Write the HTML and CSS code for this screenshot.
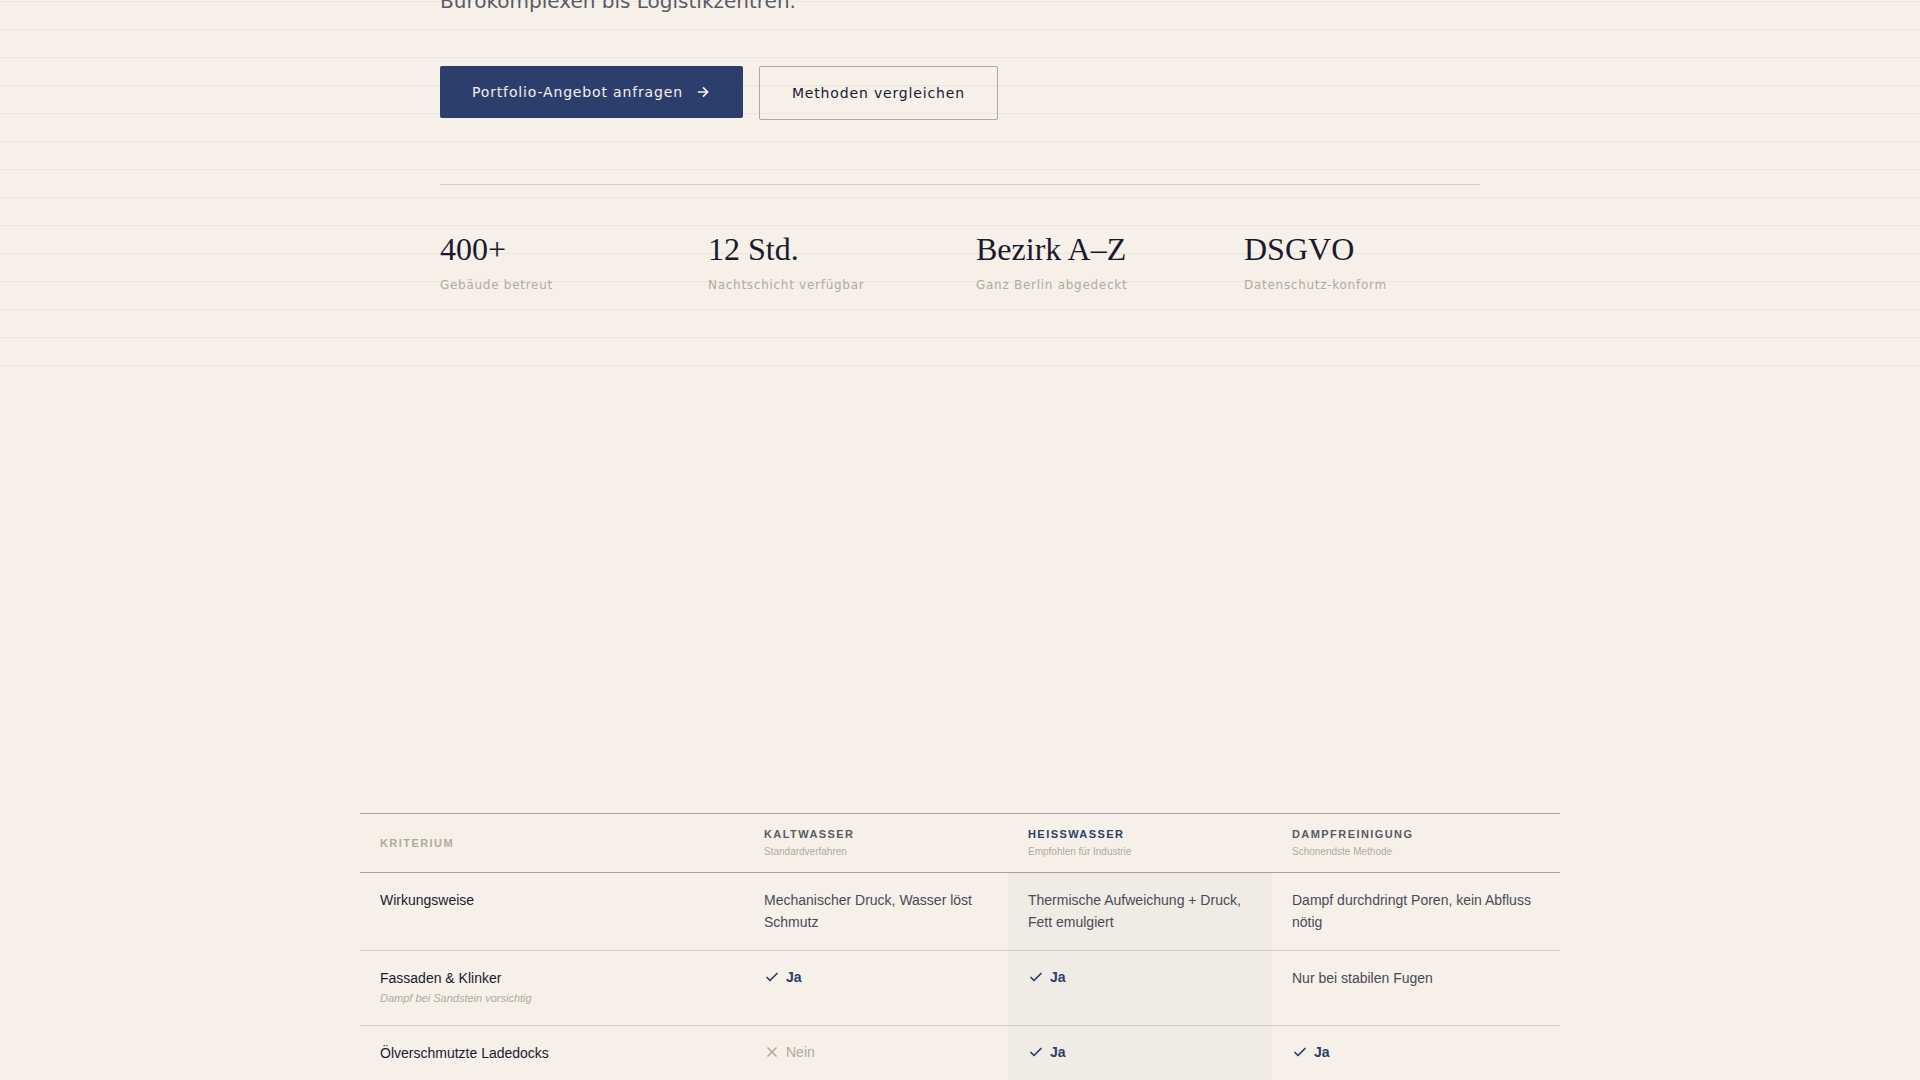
FILE: index.html
```
<!DOCTYPE html>
<html lang="de">
<head>
  <meta charset="UTF-8">
  <title>Fassadenreinigung Berlin</title>
  <meta name="viewport" content="width=device-width, initial-scale=1">
  <link rel="stylesheet" href="styles.css">
</head>
<body>
  <!-- shared icons -->
  <svg class="sprite" width="0" height="0" aria-hidden="true">
    <symbol id="arrow" viewBox="0 0 16 16"><path d="M3.5 8h9M8.5 3.8 12.7 8l-4.2 4.2"/></symbol>
    <symbol id="check" viewBox="0 0 16 16"><path d="M3 8.5l3 3 7-7"/></symbol>
    <symbol id="cross" viewBox="0 0 16 16"><path d="M4 4l8 8M12 4l-8 8"/></symbol>
  </svg>

  <section class="hero">
    <div class="hero-inner">
      <p class="hero-lead">Bürokomplexen bis Logistikzentren.</p>
      <div class="actions">
        <a class="btn btn-primary" href="#angebot">Portfolio-Angebot anfragen <svg class="icon"><use href="#arrow"/></svg></a>
        <a class="btn btn-outline" href="#methoden">Methoden vergleichen</a>
      </div>
      <div class="stats">
        <div>
          <div class="stat-value">400+</div>
          <div class="stat-label">Gebäude betreut</div>
        </div>
        <div>
          <div class="stat-value">12 Std.</div>
          <div class="stat-label">Nachtschicht verfügbar</div>
        </div>
        <div>
          <div class="stat-value">Bezirk A–Z</div>
          <div class="stat-label">Ganz Berlin abgedeckt</div>
        </div>
        <div>
          <div class="stat-value">DSGVO</div>
          <div class="stat-label">Datenschutz-konform</div>
        </div>
      </div>
    </div>
  </section>

  <section class="methods" id="methoden">
    <table class="compare">
      <colgroup>
        <col class="col-name">
        <col class="col-method">
        <col class="col-method">
        <col class="col-last">
      </colgroup>
      <thead>
        <tr>
          <th scope="col" class="muted">Kriterium</th>
          <th scope="col">Kaltwasser <span class="sub">Standardverfahren</span></th>
          <th scope="col" class="accent">Heisswasser <span class="sub">Empfohlen für Industrie</span></th>
          <th scope="col">Dampfreinigung <span class="sub">Schonendste Methode</span></th>
        </tr>
      </thead>
      <tbody>
        <tr>
          <th scope="row">Wirkungsweise</th>
          <td>Mechanischer Druck, Wasser löst Schmutz</td>
          <td class="featured">Thermische Aufweichung + Druck, Fett emulgiert</td>
          <td>Dampf durchdringt Poren, kein Abfluss nötig</td>
        </tr>
        <tr>
          <th scope="row">Fassaden &amp; Klinker <span class="note">Dampf bei Sandstein vorsichtig</span></th>
          <td><span class="mark yes"><svg class="icon"><use href="#check"/></svg>Ja</span></td>
          <td class="featured"><span class="mark yes"><svg class="icon"><use href="#check"/></svg>Ja</span></td>
          <td>Nur bei stabilen Fugen</td>
        </tr>
        <tr>
          <th scope="row">Ölverschmutzte Ladedocks</th>
          <td><span class="mark no"><svg class="icon"><use href="#cross"/></svg>Nein</span></td>
          <td class="featured"><span class="mark yes"><svg class="icon"><use href="#check"/></svg>Ja</span></td>
          <td><span class="mark yes"><svg class="icon"><use href="#check"/></svg>Ja</span></td>
        </tr>
      </tbody>
    </table>
  </section>
</body>
</html>
```
FILE: styles.css
```
* { box-sizing: border-box; margin: 0; padding: 0; }
body { font-family: "Liberation Sans", Arial, sans-serif; background: #f6f0e9; color: #1a1a2e; overflow-x: hidden; }
.sprite { display: block; }
.icon { width: 16px; height: 16px; flex: none; fill: none; stroke: currentColor; stroke-width: 1.7; stroke-linecap: round; stroke-linejoin: round; }

/* Hero */
.hero {
  margin-top: -26px;
  padding: 10px 40px 96px;
  font-family: "DejaVu Sans", sans-serif;
  background: repeating-linear-gradient(0deg, transparent 0 27px, #e9e6df 27px 28px);
}
.hero-inner { max-width: 1040px; margin: 0 auto; }
.hero-lead { font-size: 20px; line-height: 34px; color: #5a5a64; margin-bottom: 48px; }
.actions { display: flex; flex-wrap: wrap; align-items: flex-start; gap: 16px; margin-bottom: 64px; }
.btn { display: inline-flex; align-items: center; gap: 12px; padding: 16px 32px; border-radius: 2px; font-size: 14px; line-height: 20px; letter-spacing: 0.06em; text-decoration: none; }
.btn-primary { background: #2c3e6b; color: #f6f0e9; }
.btn-outline { border: 1px solid #aaa79c; color: #1a1a2e; }
.btn-primary:hover { background: #1f2e54; }
.stats { display: grid; grid-template-columns: repeat(4, 1fr); gap: 32px; padding-top: 40px; border-top: 1px solid #d4cfc9; }
.stat-value { font-family: "Liberation Serif", serif; font-size: 32px; line-height: 48px; }
.stat-label { font-size: 12px; line-height: 24px; letter-spacing: 0.06em; color: #b0ab9c; }

/* Comparison table */
.methods { padding: 420px 40px 96px; }
.compare { width: 100%; max-width: 1200px; margin: 0 auto; border-collapse: collapse; table-layout: fixed; font-size: 14px; line-height: 22px; text-align: left; }
.col-name { width: 32%; }
.col-method { width: 22%; }
.col-last { width: 24%; }
.compare th, .compare td { padding: 16px 20px 17px; vertical-align: top; }
.compare thead th { padding: 12px 20px; vertical-align: middle; font-size: 11px; line-height: 16px; letter-spacing: 0.13em; text-transform: uppercase; color: #5a5a64; }
.compare thead tr { border-top: 1px solid #a5a19b; border-bottom: 1px solid #a5a19b; }
.compare thead .muted { color: #b0ab9c; }
.compare thead .accent { color: #2c3e6b; }
.sub { display: block; margin-top: 2px; font-size: 10px; font-weight: 400; letter-spacing: 0; text-transform: none; color: #b0ab9c; }
.compare tbody tr { border-bottom: 1px solid #d4cfc9; }
.compare tbody th { font-weight: 400; }
.compare td { color: #4a4a55; }
.compare .featured { background: #f0ebe5; }
.note { display: block; font-size: 11px; line-height: 19px; font-style: italic; color: #b0ab9c; }
.mark { display: flex; align-items: center; gap: 6px; line-height: 20px; }
.yes { font-weight: 700; color: #2c3e6b; }
.no { color: #b0ab9c; }
```
